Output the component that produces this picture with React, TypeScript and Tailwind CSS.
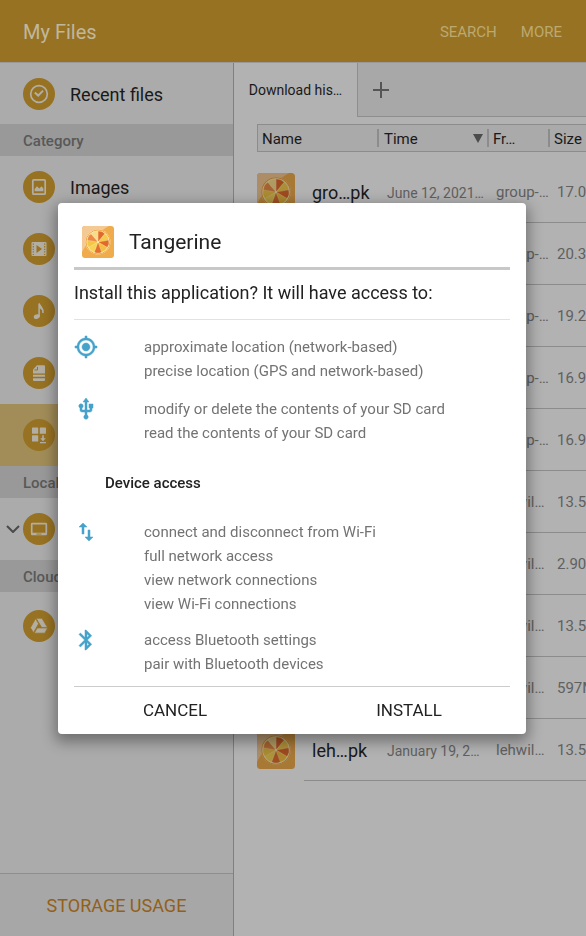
import React from "react";

type IconProps = { className?: string };

const segments = ["#e3682c", "#f6cb4c", "#e3682c", "#f4bf3f", "#e4702f", "#f6d355", "#f4c648", "#ec8a45", "#f8dc8c"];

function TangerineIcon({ className = "" }: IconProps) {
  return (
    <svg viewBox="0 0 32 32" className={className} aria-hidden="true">
      <rect width="32" height="32" rx="3" fill="#f0ab4c" />
      <path d="M3 0H27C17 6 6 14 0 26V3Q0 0 3 0Z" fill="#f5c994" />
      <circle cx="16" cy="16" r="12.5" fill="#fbeeb8" />
      <circle cx="16" cy="16" r="12" fill="none" stroke="#f0a23c" strokeWidth="0.9" />
      {segments.map((color, i) => (
        <path
          key={i}
          d="M16 15L12.7 6.1Q16 4.4 19.3 6.1Z"
          fill={color}
          stroke={color}
          strokeWidth="0.4"
          strokeLinejoin="round"
          transform={`rotate(${20 + i * 40} 16 16)`}
        />
      ))}
      <circle cx="16" cy="16" r="1" fill="#fbeeb0" />
    </svg>
  );
}

const glyphs = {
  recent: (
    <g fill="none" stroke="#b2aea4" strokeWidth="2">
      <circle cx="16" cy="16" r="8.3" strokeWidth="1.7" />
      <path d="M11.8 14.6L15.2 17.6L20 12.6" />
    </g>
  ),
  images: (
    <g>
      <rect x="9.8" y="8.8" width="12.4" height="14.4" rx="1" fill="none" stroke="#b2aea4" strokeWidth="1.7" />
      <path d="M11.6 20.3V18L14 15.2L16.3 17.4L18.5 15.2L20.4 17.6V20.3Z" fill="#b2aea4" />
    </g>
  ),
  videos: (
    <g>
      <rect x="8.5" y="9" width="15" height="14" rx="1" fill="#b2aea4" />
      <path d="M10.3 10.5V22M21.7 10.5V22" stroke="#977223" strokeWidth="1.2" strokeDasharray="1.3 1.3" />
      <path d="M13.5 12L19 16L13.5 20Z" fill="#977223" />
    </g>
  ),
  audio: (
    <g>
      <ellipse cx="13.8" cy="21.6" rx="3.1" ry="2.2" transform="rotate(-20 13.8 21.6)" fill="#b2aea4" />
      <path d="M16.1 21.5V8.5C17 12 20.6 12.5 20 18" fill="none" stroke="#b2aea4" strokeWidth="1.5" />
      <path d="M16 9V13Q19 14 20 17Q20.4 12.5 16 9Z" fill="#b2aea4" />
    </g>
  ),
  documents: (
    <g>
      <path d="M14 8.3H21Q22 8.3 22 9.3V16.4H10V12.5Z" fill="#b2aea4" />
      <path d="M14.5 9.8V13H11.4" fill="none" stroke="#977223" strokeWidth="1" />
      <path d="M10 17.8H22V19.8H10ZM10 21.2H22V23Q22 24 21 24H11Q10 24 10 23Z" fill="#b2aea4" />
    </g>
  ),
  apps: (
    <g fill="#b2aea4">
      <rect x="9" y="8.5" width="6.2" height="6.2" rx="0.5" />
      <rect x="16.8" y="8.5" width="6.2" height="6.2" rx="0.5" />
      <rect x="9" y="16.3" width="6.2" height="6.2" rx="0.5" />
      <path d="M19.2 16.3H20.8V19.3H22.8L20 22.2L17.2 19.3H19.2ZM17 23H23V24.3H17Z" />
    </g>
  ),
  device: (
    <g>
      <rect x="8.7" y="10.6" width="14.6" height="10" rx="0.6" fill="none" stroke="#b2aea4" strokeWidth="1.7" />
      <path d="M8 20H24V21.5Q24 22.3 23 22.3H9Q8 22.3 8 21.5Z" fill="#b2aea4" />
      <path d="M13.5 20.6H18.5V21.5H13.5Z" fill="#977223" />
    </g>
  ),
  drive: (
    <g fill="#b2aea4" stroke="#977223" strokeWidth="0.8">
      <path d="M13 8.2H19L24.7 17.8H18.8Z" />
      <path d="M12.6 8.6L15.6 13.7L10.5 22.8L7.4 17.7Z" />
      <path d="M14.2 17.9H24.7L21.8 23.2H11.2Z" />
    </g>
  ),
};

function RoundIcon({ name }: { name: keyof typeof glyphs }) {
  return (
    <svg viewBox="0 0 32 32" className="h-8 w-8 shrink-0" aria-hidden="true">
      <circle cx="16" cy="16" r="16" fill="#977223" />
      {glyphs[name]}
    </svg>
  );
}

type NavItemProps = { icon: keyof typeof glyphs; label: string; selected?: boolean; expandable?: boolean; className?: string };

function NavItem({ icon, label, selected, expandable, className = "h-[62px]" }: NavItemProps) {
  return (
    <button type="button" className={`flex w-full shrink-0 items-center text-left text-lg text-[#191919] ${className} ${selected ? "bg-[#a28d58]" : ""}`}>
      <span className="flex w-[23px] shrink-0 justify-center pl-0.5">
        {expandable && (
          <svg viewBox="0 0 14 8" className="h-2 w-3.5" fill="none" stroke="#4a4a4a" strokeWidth="2" aria-hidden="true">
            <path d="M1 1L7 7L13 1" />
          </svg>
        )}
      </span>
      <RoundIcon name={icon} />
      <span className="pt-0.5 pl-[15px]">{label}</span>
    </button>
  );
}

function NavHeading({ children }: { children: React.ReactNode }) {
  return (
    <h2 className="flex h-8 shrink-0 items-center bg-[#999999] pt-[2px] pl-[23px] text-[15px] font-medium text-[#585858]">{children}</h2>
  );
}

const files = [
  { name: "gro…pk", time: "June 12, 2021…", from: "group-…", size: "17.0" },
  { name: "gro…pk", time: "June 12, 2021…", from: "group-…", size: "20.3" },
  { name: "gro…pk", time: "June 12, 2021…", from: "group-…", size: "19.2" },
  { name: "gro…pk", time: "June 12, 2021…", from: "group-…", size: "16.9" },
  { name: "gro…pk", time: "June 12, 2021…", from: "group-…", size: "16.9" },
  { name: "leh…pk", time: "January 19, 2…", from: "lehwil…", size: "13.5" },
  { name: "leh…pk", time: "January 19, 2…", from: "lehwil…", size: "2.90" },
  { name: "leh…pk", time: "January 19, 2…", from: "lehwil…", size: "13.5" },
  { name: "leh…pk", time: "January 19, 2…", from: "lehwil…", size: "597M" },
  { name: "leh…pk", time: "January 19, 2…", from: "lehwil…", size: "13.5" },
];

function FileTable() {
  return (
    <table className="ml-[23px] w-full min-w-[340px] table-fixed border-separate border-spacing-0">
      <colgroup>
        <col className="w-[47px]" />
        <col className="w-[73px]" />
        <col className="w-[110px]" />
        <col className="w-[61px]" />
        <col />
      </colgroup>
      <thead>
        <tr className="h-7 text-left text-[15px] text-[#191919]">
          <th colSpan={2} className="border-y border-l border-[#8c8c8c] bg-[#aaaaaa] pt-0.5 pl-1 font-normal">Name</th>
          <th className="border-y border-[#8c8c8c] bg-[#aaaaaa] font-normal">
            <span className="flex h-[18px] items-center border-l-2 border-[#8c8c8c] pt-0.5 pr-1 pl-[5px]">
              Time
              <svg viewBox="0 0 10 9" className="mb-0.5 ml-auto h-[9px] w-2.5" fill="#4c4c4c" aria-hidden="true">
                <path d="M0 0H10L5 9Z" />
              </svg>
            </span>
          </th>
          <th className="border-y border-[#8c8c8c] bg-[#aaaaaa] font-normal">
            <span className="flex h-[18px] items-center border-l-2 border-[#8c8c8c] pt-0.5 pl-1">Fr…</span>
          </th>
          <th className="border-y border-[#8c8c8c] bg-[#aaaaaa] font-normal">
            <span className="flex h-[18px] items-center border-l-2 border-[#8c8c8c] pt-0.5 pl-1">Size</span>
          </th>
        </tr>
      </thead>
      <tbody className="text-[15px] whitespace-nowrap text-[#606060]">
        <tr className="h-[9px]" aria-hidden="true" />
        {files.map((file, i) => (
          <tr key={i} className="h-[62px]">
            <td className="p-0"><TangerineIcon className="h-[38px] w-[38px] brightness-[.7]" /></td>
            <td className="border-b border-[#8c8c8c] pt-0.5 pl-2 text-lg text-[#191919]">{file.name}</td>
            <td className="border-b border-[#8c8c8c] pt-0.5 pl-[10px] text-sm">{file.time}</td>
            <td className="border-b border-[#8c8c8c] pt-0.5 pl-[9px]">{file.from}</td>
            <td className="border-b border-[#8c8c8c] pt-0.5 pl-[9px]">{file.size}</td>
          </tr>
        ))}
      </tbody>
    </table>
  );
}

function Permission({ icon, lines }: { icon: React.ReactNode; lines: string[] }) {
  return (
    <li className="flex">
      <svg viewBox="0 0 24 24" className="h-6 w-6 shrink-0 text-[#45a2ca]" fill="currentColor" stroke="currentColor" strokeWidth="0.5" aria-hidden="true">{icon}</svg>
      <div className="pl-[46px]">
        {lines.map((line) => <p key={line}>{line}</p>)}
      </div>
    </li>
  );
}

const locationIcon = <path d="M12 8c-2.21 0-4 1.79-4 4s1.79 4 4 4 4-1.79 4-4-1.79-4-4-4zm8.94 3c-.46-4.17-3.77-7.48-7.94-7.94V1h-2v2.06C6.83 3.52 3.52 6.83 3.06 11H1v2h2.06c.46 4.17 3.77 7.48 7.94 7.94V23h2v-2.06c4.17-.46 7.48-3.77 7.94-7.94H23v-2h-2.06zM12 19c-3.87 0-7-3.13-7-7s3.13-7 7-7 7 3.13 7 7-3.13 7-7 7z" />;
const usbIcon = <path d="M15 7v4h1v2h-3V5h2l-3-4-3 4h2v8H8v-2.07c.7-.37 1.2-1.08 1.2-1.93 0-1.21-.99-2.2-2.2-2.2-1.21 0-2.2.99-2.2 2.2 0 .85.5 1.56 1.2 1.93V13c0 1.11.89 2 2 2h3v3.05c-.71.37-1.2 1.1-1.2 1.95 0 1.22.99 2.2 2.2 2.2 1.21 0 2.2-.98 2.2-2.2 0-.85-.49-1.58-1.2-1.95V15h3c1.11 0 2-.89 2-2v-2h1V7h-4z" />;
const networkIcon = <path d="M16 17.01V10h-2v7.01h-3L15 21l4-3.99h-3zM9 3L5 6.99h3V14h2V6.99h3L9 3z" />;
const bluetoothIcon = <path d="M17.71 7.71L12 2h-1v7.59L6.41 5 5 6.41 10.59 12 5 17.59 6.41 19 11 14.41V22h1l5.71-5.71-4.3-4.29 4.3-4.29zM13 5.83l1.88 1.88L13 9.59V5.83zm1.88 10.46L13 18.17v-3.76l1.88 1.88z" />;

function InstallDialog() {
  return (
    <div className="fixed inset-0 flex items-center justify-center pr-0.5">
      <section role="dialog" aria-modal="true" aria-labelledby="dialog-title" className="w-[468px] max-w-full rounded-sm bg-white px-4 text-[#222222] shadow-[0_5px_14px_3px_rgba(0,0,0,0.35)]">
        <header className="flex h-[67px] items-center border-b-[3px] border-[#c8c8c8] pt-3.5 pl-2">
          <TangerineIcon className="h-8 w-8" />
          <h1 id="dialog-title" className="pt-0.5 pl-[15px] text-[21px]">Tangerine</h1>
        </header>
        <p className="flex h-[50px] items-center border-b border-[#e2e2e2] pb-0.5 text-lg">Install this application? It will have access to:</p>
        <ul className="flex flex-col gap-3.5 pt-[15px] text-[15px] leading-6 text-[#737373]">
          <Permission icon={locationIcon} lines={["approximate location (network-based)", "precise location (GPS and network-based)"]} />
          <Permission icon={usbIcon} lines={["modify or delete the contents of your SD card", "read the contents of your SD card"]} />
        </ul>
        <h2 className="pt-[26px] pb-[25px] pl-[31px] text-[15px] leading-6 font-medium">Device access</h2>
        <ul className="flex flex-col gap-3 pb-2.5 text-[15px] leading-6 text-[#737373]">
          <Permission icon={networkIcon} lines={["connect and disconnect from Wi-Fi", "full network access", "view network connections", "view Wi-Fi connections"]} />
          <Permission icon={bluetoothIcon} lines={["access Bluetooth settings", "pair with Bluetooth devices"]} />
        </ul>
        <hr className="border-t border-[#cccccc]" />
        <footer className="-mx-4 grid h-[47px] grid-cols-2 text-[17px]">
          <button type="button" className="pt-0.5">CANCEL</button>
          <button type="button" className="pt-0.5">INSTALL</button>
        </footer>
      </section>
    </div>
  );
}

export default function App() {
  return (
    <div className="flex h-screen flex-col overflow-hidden bg-[#b2b2b2] font-[Roboto,sans-serif]">
      <header className="flex h-[62px] shrink-0 items-center bg-[#977223] pt-[2px] pr-6 pl-[23px] text-[#c0b79f]">
        <h1 className="grow text-xl">My Files</h1>
        <div className="flex gap-6 text-[15px] text-[#bba970]">
          <button type="button">SEARCH</button>
          <button type="button">MORE</button>
        </div>
      </header>
      <div className="flex min-h-0 grow border-t border-[#999999]">
        <nav className="flex w-[234px] shrink-0 flex-col border-r border-[#808080] bg-[#ababab]">
          <NavItem icon="recent" label="Recent files" className="h-[61px]" />
          <NavHeading>Category</NavHeading>
          <NavItem icon="images" label="Images" />
          <NavItem icon="videos" label="Videos" />
          <NavItem icon="audio" label="Audio" />
          <NavItem icon="documents" label="Documents" />
          <NavItem icon="apps" label="Download history" selected />
          <NavHeading>Local storage</NavHeading>
          <NavItem icon="device" label="Device storage" expandable />
          <NavHeading>Cloud storage</NavHeading>
          <NavItem icon="drive" label="Google Drive" className="h-[68px]" />
          <button type="button" className="mt-auto h-[63px] shrink-0 border-t border-[#8e8e8e] bg-[#a7a7a7] pt-0.5 text-lg text-[#936018]">STORAGE USAGE</button>
        </nav>
        <main className="min-w-0 grow overflow-hidden">
          <div className="mb-[7px] flex h-[54px]">
            <button type="button" className="w-[123px] shrink-0 text-sm text-[#191919]">Download his…</button>
            <div className="flex grow items-center border-b border-l border-[#8e8e8e] bg-[#a8a8a8] pl-[15px]">
              <button type="button" aria-label="New tab">
                <svg viewBox="0 0 16 16" className="h-4 w-4" stroke="#555555" strokeWidth="2" aria-hidden="true">
                  <path d="M8 0V16M0 8H16" />
                </svg>
              </button>
            </div>
          </div>
          <FileTable />
        </main>
      </div>
      <InstallDialog />
    </div>
  );
}
